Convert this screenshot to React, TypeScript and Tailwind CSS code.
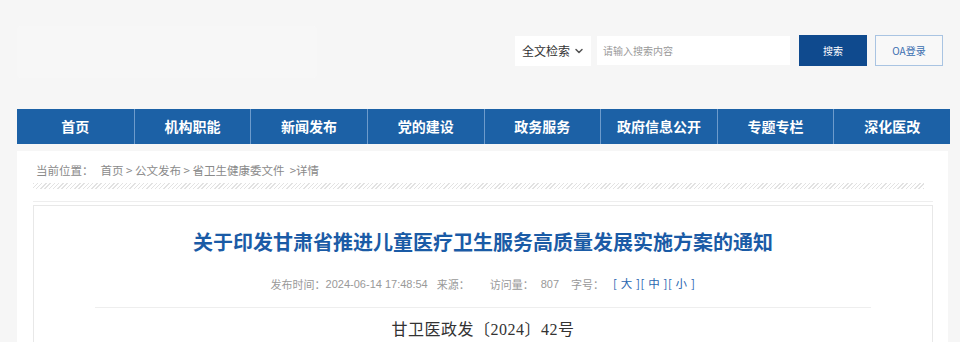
import { ChevronDown } from 'lucide-react';

const navItems = ['首页', '机构职能', '新闻发布', '党的建设', '政务服务', '政府信息公开', '专题专栏', '深化医改'];

const font = "font-['Noto_Sans_CJK_SC','Noto_Sans',sans-serif]";

const App = () => {
  return (
    <div className={`w-[960px] h-[342px] overflow-hidden bg-[#f6f6f6] ${font}`}>
      {/* header */}
      <div className="h-[109px] w-[933px] ml-[17px] flex items-start justify-between">
        <div className="mt-[26px] w-[300px] h-[52px] bg-[#f8f8f8] rounded-sm opacity-80" />
        <div className="mt-[35px] mr-[7px] flex items-center">
          <div className="w-[76px] h-[30px] bg-white flex items-center justify-between pl-[7px] pr-[6px] text-[12px] text-[#333]">
            <span>全文检索</span>
            <ChevronDown className="w-3 h-3 text-[#555]" strokeWidth={3} />
          </div>
          <div className="ml-[6px] w-[193px] h-[29px] bg-white flex items-center pl-[6px] text-[10px] text-[#999]">
            请输入搜索内容
          </div>
          <button className="ml-[9px] w-[68px] h-[31px] bg-[#0f4a8e] text-white text-[10px]">搜索</button>
          <button className="ml-[8px] w-[68px] h-[31px] border border-[#a9c4e2] text-[#3b6fb0] text-[10px] bg-[#f8f8f8]">
            OA登录
          </button>
        </div>
      </div>

      {/* nav */}
      <div className="w-[933px] ml-[17px] h-[35px] bg-[#1c61a6] grid grid-cols-8">
        {navItems.map((item, i) => (
          <div
            key={item}
            className={`flex items-center justify-center text-white text-[14px] font-bold ${i > 0 ? 'border-l border-[#6d9bcc]' : ''}`}
          >
            {item}
          </div>
        ))}
      </div>

      {/* content */}
      <div className="w-[931px] ml-[17px] mt-[7px] bg-white pl-[16px] pr-[15px] pt-[12px] h-[200px]">
        <div className="pl-[3px] text-[11.5px] text-[#8a8a8a] flex items-center h-[16px]">
          <span>当前位置：</span>
          <span className="ml-[7px] whitespace-pre">首页 &gt; 公文发布 &gt; 省卫生健康委文件  &gt;详情</span>
        </div>
        <div className="mt-[4px] mr-[9px] h-[6px] bg-[repeating-linear-gradient(135deg,#e2e2e2_0_1px,transparent_1px_3px)]" />
        <div className="mt-[12px] h-px bg-[#eeeeee]" />
        <div className="mt-[3px] border border-[#e8e8e8] h-[140px] flex flex-col items-center">
          <h1 className="mt-[22px] text-[20px] leading-[28px] font-bold text-[#1a5ba6]">
            关于印发甘肃省推进儿童医疗卫生服务高质量发展实施方案的通知
          </h1>
          <div className="mt-[20px] text-[11px] text-[#999] flex items-center h-[16px]">
            <span>发布时间：</span>
            <span className="font-['Liberation_Sans',sans-serif]">2024-06-14 17:48:54</span>
            <span className="ml-[9px]">来源：</span>
            <span className="ml-[20px]">访问量：</span>
            <span className="ml-[7px] font-['Liberation_Sans',sans-serif]">807</span>
            <span className="ml-[12px]">字号：</span>
            <span className="ml-[9px] text-[#2a66b0] text-[11.5px] tracking-[0.6px] whitespace-pre">[ 大 ][ 中 ][ 小 ]</span>
          </div>
          <div className="mt-[15px] w-[776px] h-px bg-[#eeeeee]" />
          <div className="mt-[10px] text-[16px] text-[#333] tracking-[0.5px] font-['Liberation_Serif','Noto_Sans_CJK_SC',serif]">
            甘卫医政发〔2024〕42号
          </div>
        </div>
      </div>
    </div>
  );
};

export default App;
